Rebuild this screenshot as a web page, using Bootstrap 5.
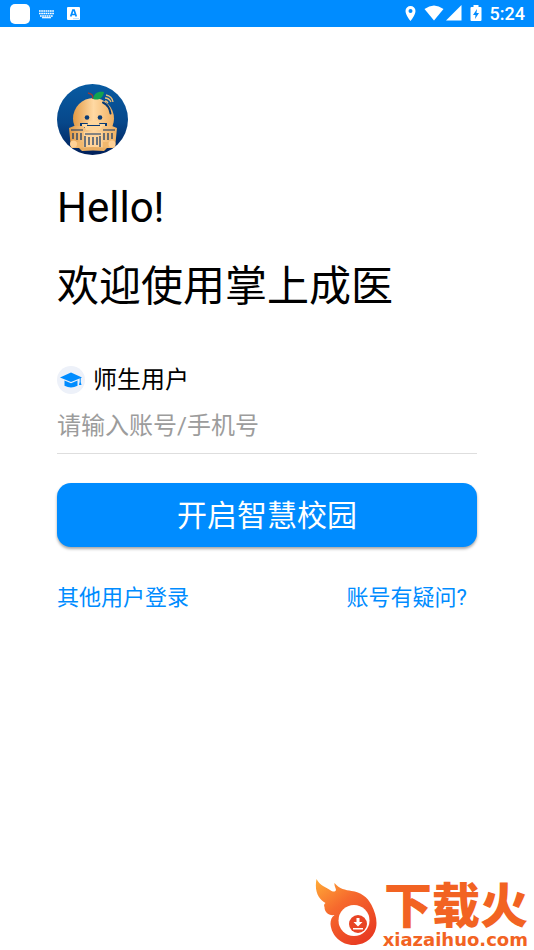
<!DOCTYPE html>
<html lang="zh-CN">
<head>
<meta charset="utf-8">
<meta name="viewport" content="width=device-width, initial-scale=1">
<title>掌上成医</title>
<link href="https://cdn.jsdelivr.net/npm/bootstrap@5.3.0/dist/css/bootstrap.min.css" rel="stylesheet">
<style>
  :root { --brand: #008cff; }
  body { font-family: Roboto, "Noto Sans CJK SC", sans-serif; color: #000; background: #fff; }
  .status-bar { background: var(--brand); height: 27px; padding: 0 9px 0 10px; font-size: 18px; line-height: 27px; font-weight: 500; }
  .app-square { width: 20px; height: 20px; border-radius: 5px; }
  .login-panel { padding: 57px 57px 0; }
  .greeting { font-size: 42px; line-height: 79px; }
  .greeting-block { margin-top: 13px; }
  .user-type { margin-top: 36px; font-size: 24px; line-height: 36px; }
  .account-field { height: 56px; padding: 0; border: 0; border-bottom: 1px solid #dedede; border-radius: 0; font-size: 24px; line-height: 36px; background: transparent; color: #000; }
  .account-field::placeholder { color: #9c9c9c; }
  .account-field:focus { box-shadow: none; border-color: var(--brand); }
  .btn-enter { margin-top: 29px; height: 64px; padding: 2px 0 0; font-size: 30px; line-height: 62px; border: 0; border-radius: 14px; background: var(--brand); color: #fff; box-shadow: 0 2px 3px rgba(0, 0, 0, .35); }
  .btn-enter:hover { background: #007ee6; color: #fff; }
  .help-links { margin-top: 34px; padding-right: 10px; font-size: 22px; line-height: 34px; }
  .help-links a { color: var(--brand); }
  .site-brand { padding-right: 6px; color: #f26322; }
  .site-name { margin-bottom: 5px; font-family: "Noto Sans CJK SC", sans-serif; font-weight: 900; font-size: 48px; line-height: 46px; }
  .site-url { font-family: "DejaVu Sans", sans-serif; font-weight: 700; font-size: 18px; line-height: 20px; }
</style>
</head>
<body class="d-flex flex-column min-vh-100">
<header class="status-bar d-flex align-items-center justify-content-between text-white">
  <div class="d-flex align-items-center">
    <span class="app-square bg-white"></span>
    <svg class="ms-2" width="17" height="10" viewBox="0 0 17 10" fill="none" stroke="#fff" aria-hidden="true">
      <path d="M1 2h15M1 4.500h15M2 7h13" stroke-width="1.700" stroke-dasharray="1.700 .5"/><path d="M4 8.700h9" stroke-width="1.200"/>
    </svg>
    <svg class="ms-2" width="21" height="14" viewBox="0 0 21 14" aria-hidden="true">
      <rect x="4" y="0" width="13" height="13" rx="1" fill="#fff"/>
      <path d="M7.700 9.500l2.200-6.500h1.200l2.200 6.500M8.500 7.500h4" fill="none" stroke="#008cff" stroke-width="1.700"/>
      <path d="M10.500 11.700h5" stroke="#008cff" stroke-width=".6" stroke-dasharray="1 1"/>
    </svg>
  </div>
  <div class="d-flex align-items-center">
    <svg width="78" height="18" viewBox="0 0 78 18" fill="#fff" aria-hidden="true">
      <path fill-rule="evenodd" d="M6.500 1a5 5 0 0 0-5 5c0 4 5 10 5 10s5-6 5-10a5 5 0 0 0-5-5zm0 3a2 2 0 1 1 0 4 2 2 0 0 1 0-4z"/>
      <path d="M20.500 4Q30-3 39.500 4L30 15.500z"/>
      <path d="M57.500 0v15.500H42z"/>
      <path fill-rule="evenodd" d="M69.500 0h5v2h2q1 0 1 1v12q0 1-1 1h-9q-1 0-1-1V3q0-1 1-1h2zM73 4l-4 6h2.500l-.5 4 4-6h-2.500z"/>
    </svg>
    <span class="ms-2">5:24</span>
  </div>
</header>

<main class="login-panel">
  <svg class="d-block" width="71" height="71" viewBox="0 0 71 71" role="img" aria-label="掌上成医">
    <defs>
      <linearGradient id="sky" x1="0" y1="0" x2="0" y2="1"><stop stop-color="#075ba2"/><stop offset=".55" stop-color="#07478a"/><stop offset="1" stop-color="#001f59"/></linearGradient>
      <linearGradient id="gold"><stop stop-color="#e29a45"/><stop offset=".5" stop-color="#ffd9a3"/><stop offset="1" stop-color="#f0b062"/></linearGradient>
      <clipPath id="disc"><circle cx="35.500" cy="35.500" r="35.500"/></clipPath>
    </defs>
    <g clip-path="url(#disc)">
      <path fill="url(#sky)" d="M0 0h71v71H0z"/>
      <circle cx="36.500" cy="34.500" r="20.500" fill="url(#gold)"/>
      <path d="M46 18.500c4 2 7 6 7.500 11" fill="none" stroke="#073b75" stroke-width="2" stroke-linecap="round"/>
      <path d="M36 15c0-4-1-5-5-6" fill="none" stroke="#9b3933" stroke-width="1.500"/>
      <path d="M36 15c1-6 5-8 11-7-1 6-5 9-11 7z" fill="#12a34f"/>
      <g fill="none" stroke="#e8bd78" stroke-width="1.300"><path d="M48 17q2 0 3 2M48 14q4 0 6 4M49 11q6 1 7 7"/></g>
      <g fill="#0a3b74"><circle cx="30" cy="33.500" r="2.300"/><circle cx="43" cy="33.500" r="2.300"/></g>
      <path d="M23 39h27v5H23z" fill="#0a3b74"/>
      <path d="M32 37h9l2 4H30zM25 40h5v3h-5zM43 40h5v3h-5zM28 42h17v4H28z" fill="#ffd79b"/>
      <path d="M12 44l5-2h9l3 3v19H14zM60 44l-5-2h-9l-3 3v19h15z" fill="url(#gold)"/>
      <path d="M27 48h18v16q-9 2-18 0z" fill="#ffd49a"/>
      <g stroke="#0a3267" stroke-width="1.200" fill="none"><path d="M14 46h12M46 46h12M28 50h16M16 49v6M20 49v7M24 49v7M47 49v7M51 49v7M55 49v6M28 52v11M43 52v11M32 53v8M36 53v8M40 53v8"/></g>
      <path d="M15 58h11v6H15zM46 58h10v6H46z" fill="#f1b86e"/>
      <path d="M22 64q14-2 28 0l-3 3q-11-1-22 0z" fill="#e8ad61"/>
      <circle cx="16.500" cy="60" r="3.500" fill="#ffd196"/><circle cx="55" cy="60" r="3.500" fill="#ffd196"/>
    </g>
  </svg>

  <div class="greeting-block">
    <h1 class="greeting fw-normal m-0">Hello!</h1>
    <p class="greeting m-0">欢迎使用掌上成医</p>
  </div>

  <form>
    <label for="account" class="user-type d-flex align-items-center gap-2">
      <svg width="28" height="28" viewBox="0 0 28 28" aria-hidden="true">
        <circle cx="14" cy="14" r="14" fill="#edf1f9"/>
        <g fill="#008cff"><path d="M14 6.500L3 11.500l11 4.500 11-4.500z"/><path d="M7.500 14.500L14 17.300l6.500-2.800v5.200q-6.500 3.600-13 0z"/><path d="M22.700 12h1v4l.8 3h-2.600l.8-3z"/></g>
      </svg>
      <span>师生用户</span>
    </label>
    <input id="account" class="account-field form-control" type="text" placeholder="请输入账号/手机号">
    <button type="button" class="btn btn-enter w-100">开启智慧校园</button>
  </form>
  <nav class="help-links d-flex justify-content-between" aria-label="登录帮助">
    <a href="#" class="text-decoration-none">其他用户登录</a>
    <a href="#" class="text-decoration-none">账号有疑问?</a>
  </nav>
</main>

<footer class="site-brand d-flex justify-content-end align-items-start gap-1 mt-auto">
  <svg width="64" height="67" viewBox="0 0 64 67" aria-hidden="true">
    <defs><linearGradient id="flame" x1="0" y1="0" x2=".7" y2="1"><stop stop-color="#ffac38"/><stop offset=".45" stop-color="#f6692d"/><stop offset="1" stop-color="#e93c22"/></linearGradient></defs>
    <path d="M1.500 0C5 7 11 8 15 11c3 2 5 2 6 0 0-2-2-4-1.500-7 5 6 11 7 17 8 9 1 16 6 20 14 3 6 5 12 5 18 0 13-10 22-23 22-12 0-22-9-23-21 0-4 1-7 4-9-6 1-10-3-10-8-1-2 0-3 1-4C4 20-1 13 1.500 0z" fill="url(#flame)"/>
    <circle cx="39" cy="41.500" r="15.500" fill="#fff"/>
    <circle cx="43" cy="45" r="9" fill="#e84424"/>
    <path d="M41.500 39h3v4h3L43 47.500 38.500 43h3zM38 49h10v1.600H38z" fill="#fff"/>
  </svg>
  <div class="text-end">
    <div class="site-name">下载火</div>
    <div class="site-url">xiazaihuo.com</div>
  </div>
</footer>
<script src="https://cdn.jsdelivr.net/npm/bootstrap@5.3.0/dist/js/bootstrap.bundle.min.js"></script>
</body>
</html>
